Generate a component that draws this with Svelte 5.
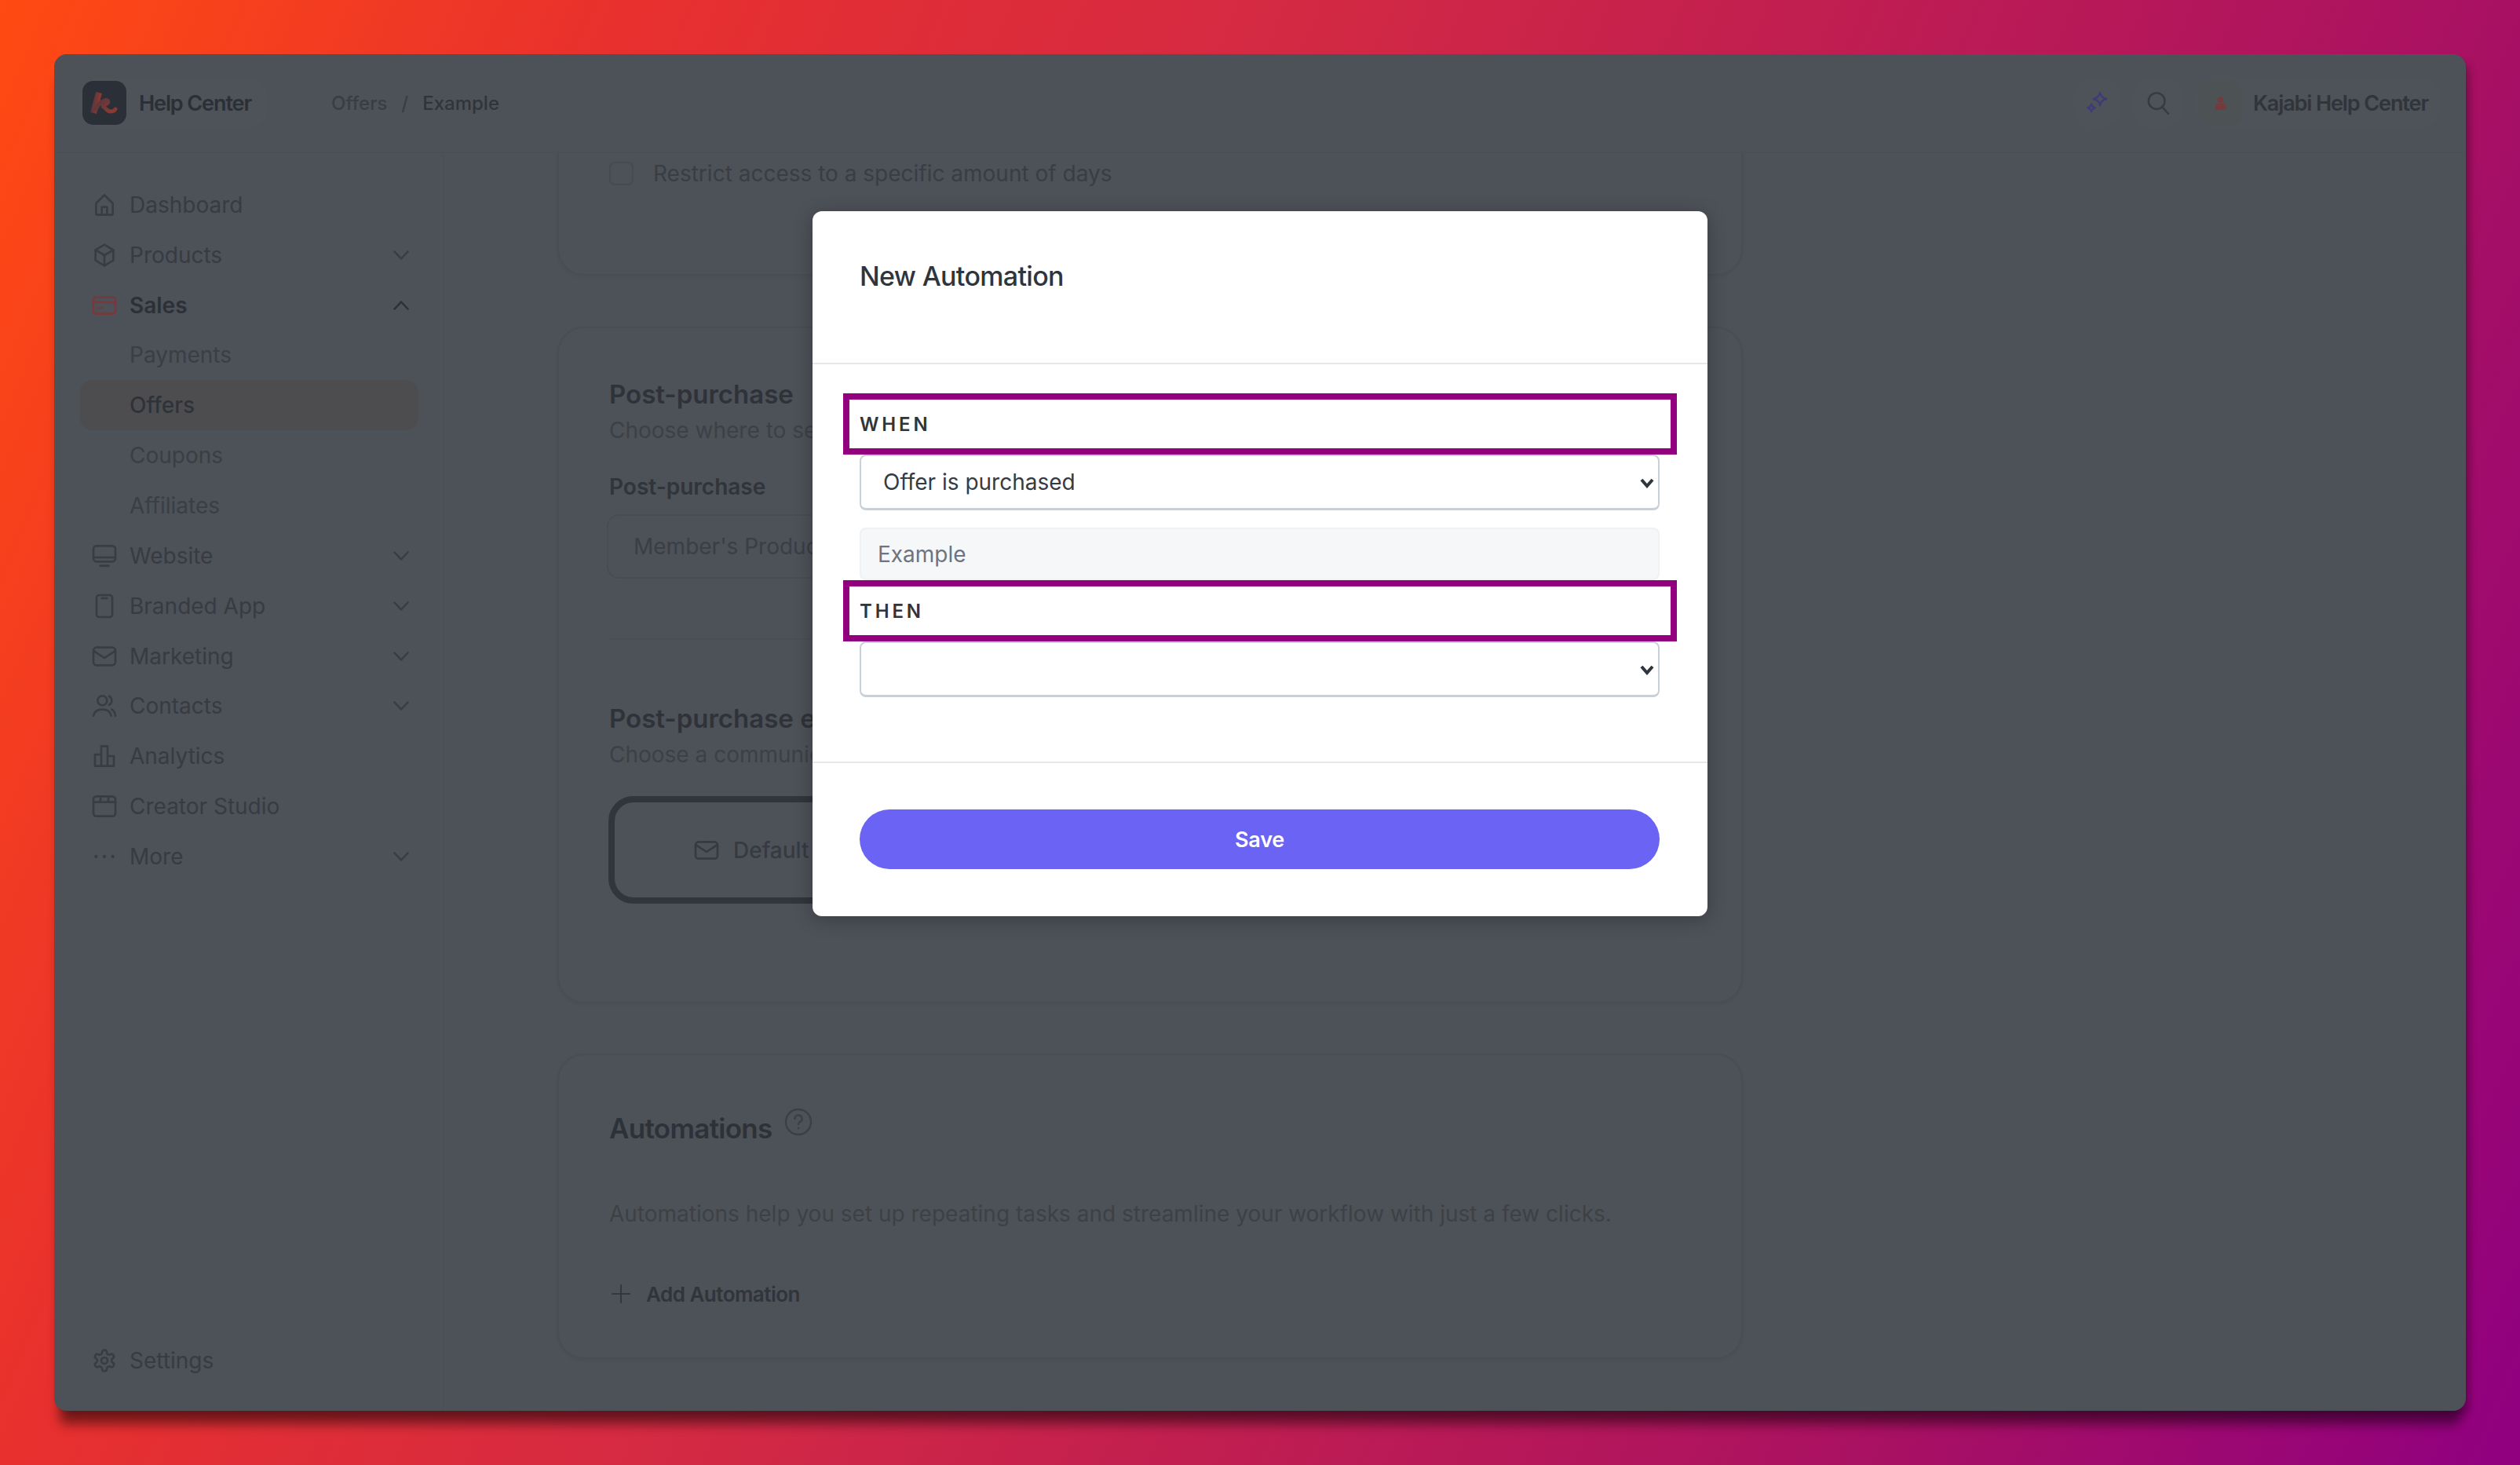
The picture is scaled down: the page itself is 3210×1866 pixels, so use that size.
<script>
  const navItems = [
    { label: "Dashboard", icon: "home" },
    { label: "Products", icon: "box", chevron: "down" },
    { label: "Sales", icon: "card", chevron: "up", active: true },
    { label: "Payments", sub: true },
    { label: "Offers", sub: true, selected: true },
    { label: "Coupons", sub: true },
    { label: "Affiliates", sub: true },
    { label: "Website", icon: "monitor", chevron: "down" },
    { label: "Branded App", icon: "phone", chevron: "down" },
    { label: "Marketing", icon: "mail", chevron: "down" },
    { label: "Contacts", icon: "people", chevron: "down" },
    { label: "Analytics", icon: "bars" },
    { label: "Creator Studio", icon: "studio" },
    { label: "More", icon: "dots", chevron: "down" }
  ];
</script>

{#snippet icon(name)}
  <svg class="icon" class:red={name === "card"} viewBox="0 0 24 24" fill="none" stroke="currentColor" stroke-width="2" stroke-linecap="round" stroke-linejoin="round">
    {#if name === "home"}
      <path d="M4 10.500 12 2.500l8 8V20a1.500 1.500 0 0 1-1.500 1.500h-13A1.500 1.500 0 0 1 4 20z" />
      <path d="M9.500 21.500V14h5v7.500" />
    {:else if name === "box"}
      <path d="M12 2 20.500 7v10L12 22l-8.500-5V7z" />
      <path d="M3.500 7 12 12l8.500-5M12 12v10" />
    {:else if name === "card"}
      <rect x="1.500" y="4" width="21" height="16" rx="2.500" />
      <path d="M1.500 9h21M5.500 14.500h4" />
    {:else if name === "monitor"}
      <rect x="1.500" y="2.500" width="21" height="15" rx="3" />
      <path d="M1.500 13.500h21M8 21.500h8" />
    {:else if name === "phone"}
      <rect x="4.500" y="1.500" width="15" height="21" rx="2.500" />
      <path d="M9.500 4.500h5" />
    {:else if name === "mail"}
      <rect x="1.500" y="3.500" width="21" height="17" rx="3" />
      <path d="M2 7l10 6.500L22 7" />
    {:else if name === "people"}
      <circle cx="10" cy="7" r="4.500" />
      <path d="M1.500 21.500c.8-4 4.200-6 8.500-6s7.700 2 8.500 6M16.500 2.800a4.800 4.800 0 0 1 0 8.400M19 15.500c1.800.9 3 3 3.500 6" />
    {:else if name === "bars"}
      <path d="M3 21.500V10.500h6v11zM9 21.500V2.500h6v19zM15 21.500V12h6v9.500zM3 21.500h18" />
    {:else if name === "studio"}
      <rect x="1.500" y="2.500" width="21" height="19" rx="3" />
      <path d="M1.500 8h21M8.500 2.500 8 8M16 2.500 15.500 8" />
    {:else if name === "dots"}
      <circle cx="4" cy="12" r="1.600" fill="currentColor" stroke="none" />
      <circle cx="12" cy="12" r="1.600" fill="currentColor" stroke="none" />
      <circle cx="20" cy="12" r="1.600" fill="currentColor" stroke="none" />
    {:else if name === "gear"}
      <path d="M12.220 2h-.44a2 2 0 0 0-2 2v.18a2 2 0 0 1-1 1.730l-.43.25a2 2 0 0 1-2 0l-.15-.08a2 2 0 0 0-2.730.73l-.22.38a2 2 0 0 0 .73 2.730l.15.1a2 2 0 0 1 1 1.720v.51a2 2 0 0 1-1 1.740l-.15.09a2 2 0 0 0-.73 2.730l.22.38a2 2 0 0 0 2.730.73l.15-.08a2 2 0 0 1 2 0l.43.25a2 2 0 0 1 1 1.730V20a2 2 0 0 0 2 2h.44a2 2 0 0 0 2-2v-.18a2 2 0 0 1 1-1.730l.43-.25a2 2 0 0 1 2 0l.15.08a2 2 0 0 0 2.730-.73l.22-.39a2 2 0 0 0-.73-2.730l-.15-.08a2 2 0 0 1-1-1.740v-.5a2 2 0 0 1 1-1.740l.15-.09a2 2 0 0 0 .73-2.730l-.22-.38a2 2 0 0 0-2.730-.73l-.15.08a2 2 0 0 1-2 0l-.43-.25a2 2 0 0 1-1-1.730V4a2 2 0 0 0-2-2z" />
      <circle cx="12" cy="12" r="3" />
    {/if}
  </svg>
{/snippet}

{#snippet chevron(dir)}
  <svg class="chevron" class:strong={dir === "up"} viewBox="0 0 24 24" fill="none" stroke="currentColor" stroke-width="2.500" stroke-linecap="round" stroke-linejoin="round">
    <path d={dir === "up" ? "M3.500 16.500 12 7.500l8.500 9" : "M3.500 7.500 12 16.500l8.500-9"} />
  </svg>
{/snippet}

{#snippet selectArrow()}
  <svg class="select-arrow" viewBox="0 0 18 14" width="18" height="14" fill="none" stroke="#2f353d" stroke-width="4">
    <path d="M2 3l7 8 7-8" />
  </svg>
{/snippet}

<div class="window">
  <header class="topbar">
    <div class="brand">
      <div class="logo">
        <svg viewBox="0 0 56 56" width="56" height="56" fill="none" stroke-linecap="round">
          <defs>
            <linearGradient id="kgrad" x1="0" y1="0" x2="1" y2="0.6">
              <stop offset="0" stop-color="#54363f" />
              <stop offset="1" stop-color="#8a3a30" />
            </linearGradient>
          </defs>
          <path d="M21 15 14 41" stroke="url(#kgrad)" stroke-width="8" stroke-linecap="butt" />
          <path d="M17 36c4-8 11-13 15-11 3 2-2 6-8 7 5 0 6 7 12 7 3 0 5-1 6-3" stroke="url(#kgrad)" stroke-width="5" />
        </svg>
      </div>
      <span>Help Center</span>
    </div>
    <nav class="crumbs">
      <span>Offers</span>
      <span class="slash">/</span>
      <span class="current">Example</span>
    </nav>
    <div class="top-actions">
      <div class="round-btn spark">
        <svg viewBox="0 0 32 32" width="32" height="32" fill="none" stroke="#3e3b78" stroke-width="2.400" stroke-linejoin="round">
          <path d="M20 3c.8 4.400 2.800 6.600 8 8-5.200 1.400-7.200 3.600-8 8-.8-4.400-2.800-6.600-8-8 5.200-1.400 7.200-3.600 8-8z" />
          <path d="M9 17.500c.5 2.700 1.800 4 4.800 4.800-3 .8-4.300 2.100-4.800 4.700-.5-2.600-1.800-3.900-4.800-4.700 3-.8 4.300-2.100 4.800-4.800z" />
        </svg>
      </div>
      <div class="round-btn">
        <svg viewBox="0 0 32 32" width="30" height="30" fill="none" stroke="#363a41" stroke-width="2.600" stroke-linecap="round">
          <circle cx="14" cy="13.500" r="11" />
          <path d="M22 22 30 31" />
        </svg>
      </div>
      <div class="user">
        <div class="avatar">
          <svg viewBox="0 0 20 20" width="17" height="17" fill="#763a3c">
            <circle cx="10" cy="5" r="4.500" />
            <path d="M1.500 18c0-5 2-7 4-7h9c2 0 4 2 4 7 0 1-.5 1.500-1.500 1.500H3c-1 0-1.500-.5-1.500-1.500z" />
          </svg>
        </div>
        <span>Kajabi Help Center</span>
      </div>
    </div>
  </header>

  <div class="layout">
    <aside class="sidebar">
      <ul class="nav">
        {#each navItems as item (item.label)}
          <li class="row" class:sub={item.sub} class:selected={item.selected} class:active={item.active}>
            {#if item.icon}{@render icon(item.icon)}{/if}
            <span class="row-label">{item.label}</span>
            {#if item.chevron}{@render chevron(item.chevron)}{/if}
          </li>
        {/each}
      </ul>
      <div class="row settings">
        {@render icon("gear")}
        <span class="row-label">Settings</span>
      </div>
    </aside>

    <main class="content">
      <section class="card access">
        <label class="check-row">
          <span class="checkbox"></span>
          <span>Restrict access to a specific amount of days</span>
        </label>
      </section>

      <section class="card post">
        <h3>Post-purchase</h3>
        <p class="hint">Choose where to send</p>
        <div class="field-label">Post-purchase</div>
        <div class="fake-input">Member's Products</div>
        <hr />
        <h3 class="second">Post-purchase email</h3>
        <p class="hint">Choose a communication</p>
        <div class="choice">
          <svg viewBox="0 0 24 24" width="32" height="32" fill="none" stroke="#363a41" stroke-width="2" stroke-linejoin="round">
            <rect x="1.500" y="4" width="21" height="16" rx="3" />
            <path d="M2 7l10 6.500L22 7" />
          </svg>
          <span>Default</span>
        </div>
      </section>

      <section class="card automations">
        <div class="auto-title">
          <h2>Automations</h2>
          <svg class="help" viewBox="0 0 36 36" width="36" height="36" fill="none" stroke="#3b3f46" stroke-width="2.400" stroke-linecap="round">
            <circle cx="18" cy="18" r="16" />
            <path d="M13.500 14a4.500 4.500 0 1 1 6.500 4c-1.500.8-2 1.600-2 3" />
            <circle cx="18" cy="26" r="1.200" fill="#3b3f46" stroke="none" />
          </svg>
        </div>
        <p class="auto-desc">Automations help you set up repeating tasks and streamline your workflow with just a few clicks.</p>
        <div class="add-auto">
          <svg viewBox="0 0 24 24" width="24" height="24" fill="none" stroke="#33373e" stroke-width="2" stroke-linecap="round">
            <path d="M12 1v22M1 12h22" />
          </svg>
          <span>Add Automation</span>
        </div>
      </section>
    </main>
  </div>

  <div class="backdrop">
    <div class="modal">
      <div class="modal-head">
        <h1>New Automation</h1>
      </div>
      <div class="modal-body">
        <div class="step-label">WHEN</div>
        <div class="select-wrap">
          <select class="select">
            <option>Offer is purchased</option>
          </select>
          {@render selectArrow()}
        </div>
        <input class="readonly" value="Example" disabled />
        <div class="step-label">THEN</div>
        <div class="select-wrap">
          <select class="select">
            <option></option>
          </select>
          {@render selectArrow()}
        </div>
      </div>
      <div class="modal-foot">
        <button class="save">Save</button>
      </div>
    </div>
  </div>
</div>

<style>
  :global(body) {
    margin: 0;
    height: 1866px;
    overflow: hidden;
    font-family: Inter, "Liberation Sans", sans-serif;
    background: linear-gradient(113deg, #ff4a12 0%, #e8302e 20%, #d52a42 40%, #a81063 80%, #900080 100%);
  }

  .window {
    position: relative;
    display: flex;
    flex-direction: column;
    width: 3072px;
    height: 1728px;
    margin: 69px;
    background: #4d5158;
    border-radius: 16px;
    box-shadow: 0 24px 14px -6px rgba(0, 0, 0, 0.42), 8px 8px 10px -2px rgba(0, 0, 0, 0.22);
    color: #363a41;
  }

  /* Top bar */
  .topbar {
    display: flex;
    align-items: center;
    height: 126px;
    flex-shrink: 0;
    padding: 0 33px;
    box-sizing: border-box;
    border-bottom: 2px solid #4b4f56;
  }

  .brand {
    display: flex;
    align-items: center;
    gap: 16px;
    height: 64px;
    padding: 0 20px 0 3px;
    border-radius: 22px;
    background: #4e5259;
    font-size: 27px;
    font-weight: 600;
    letter-spacing: -1.1px;
    color: #2b2f36;
  }

  .logo {
    width: 56px;
    height: 56px;
    border-radius: 14px;
    background: #2a2f38;
  }

  .crumbs {
    display: flex;
    gap: 18px;
    margin-left: 82px;
    font-size: 24px;
    font-weight: 500;
    color: #393d44;
  }

  .crumbs .current {
    color: #30343b;
  }

  .top-actions {
    display: flex;
    align-items: center;
    gap: 16px;
    margin-left: auto;
  }

  .round-btn {
    display: flex;
    align-items: center;
    justify-content: center;
    width: 64px;
    height: 64px;
    border-radius: 24px;
    background: #4e5259;
  }

  .round-btn.spark {
    width: 60px;
  }

  .user {
    display: flex;
    align-items: center;
    gap: 13px;
    height: 64px;
    padding: 0 15px 0 3px;
    border-radius: 24px;
    background: #4e5259;
    font-size: 27px;
    font-weight: 600;
    letter-spacing: -1.1px;
    color: #30343b;
  }

  .avatar {
    display: flex;
    align-items: center;
    justify-content: center;
    width: 57px;
    height: 56px;
    border-radius: 16px;
    background: #4d5255;
  }

  .layout {
    display: flex;
    flex: 1;
    min-height: 0;
  }

  /* Sidebar */
  .sidebar {
    display: flex;
    flex-direction: column;
    width: 497px;
    flex-shrink: 0;
    padding: 34px 31px 32px 33px;
    box-sizing: border-box;
    border-right: 2px solid #4b4f56;
  }

  .nav {
    list-style: none;
    margin: 0;
    padding: 0;
  }

  .row {
    display: flex;
    align-items: center;
    gap: 16px;
    height: 63.85px;
    padding: 0 10px 0 15px;
    box-sizing: border-box;
    border-radius: 16px;
    font-size: 28px;
    color: #373b42;
  }

  .row.sub {
    padding-left: 63px;
    color: #3a3e45;
  }

  .row.selected {
    background: #4d4d50;
    color: #2f3339;
    font-weight: 500;
  }

  .row.active {
    color: #2c3037;
    font-weight: 600;
  }

  .row-label {
    flex: 1;
  }

  .settings {
    margin-top: auto;
  }

  .icon {
    width: 32px;
    height: 32px;
    flex-shrink: 0;
    color: #383c43;
  }

  .icon.red {
    color: #77393b;
  }

  .chevron {
    width: 24px;
    height: 24px;
    flex-shrink: 0;
    color: #383c43;
  }

  .chevron.strong {
    color: #2c3037;
  }

  /* Page behind the modal */
  .content {
    flex: 1;
    min-width: 0;
    padding-left: 144px;
    overflow: hidden;
  }

  .card {
    width: 1510px;
    box-sizing: border-box;
    padding: 0 64px;
    border: 2px solid #494d54;
    border-radius: 34px;
    box-shadow: 0 2px 4px rgba(0, 0, 0, 0.04);
  }

  .card.access {
    height: 258px;
    margin-top: -102px;
    padding-top: 109px;
  }

  .check-row {
    display: flex;
    align-items: center;
    gap: 25px;
    font-size: 28px;
    color: #393d44;
  }

  .checkbox {
    width: 31px;
    height: 30px;
    border: 2px solid #464a51;
    border-radius: 7px;
    box-sizing: border-box;
  }

  .card.post {
    height: 862px;
    margin-top: 65px;
    padding-top: 62px;
  }

  .card h3 {
    margin: 0;
    font-size: 33px;
    line-height: 44px;
    font-weight: 600;
    color: #2f3339;
  }

  .hint {
    margin: 4px 0 0;
    font-size: 28px;
    line-height: 40px;
    color: #3c4047;
  }

  .field-label {
    margin-top: 34px;
    font-size: 28px;
    line-height: 36px;
    font-weight: 600;
    color: #30343b;
  }

  .fake-input {
    display: flex;
    align-items: center;
    width: 900px;
    height: 82px;
    margin: 17px 0 0 -3px;
    padding-left: 32px;
    box-sizing: border-box;
    border: 2px solid #484c53;
    border-radius: 16px;
    font-size: 28px;
    color: #3a3e45;
  }

  .card hr {
    height: 2px;
    margin: 76px 0 0;
    border: none;
    background: #4a4e55;
  }

  .card h3.second {
    margin-top: 78px;
  }

  .choice {
    display: flex;
    align-items: center;
    gap: 18px;
    width: 650px;
    height: 137px;
    margin: 33px 0 0 -1px;
    padding-left: 101px;
    box-sizing: border-box;
    border: 8px solid #31353c;
    border-radius: 32px;
    font-size: 28px;
    font-weight: 500;
    color: #363a41;
  }

  .card.automations {
    height: 389px;
    margin-top: 64px;
    padding-top: 71px;
  }

  .auto-title {
    display: flex;
    align-items: flex-start;
    gap: 15px;
  }

  .auto-title h2 {
    margin: 0;
    font-size: 35px;
    line-height: 44px;
    font-weight: 600;
    letter-spacing: -0.02em;
    color: #2d3138;
  }

  .help {
    margin-top: -4px;
  }

  .auto-desc {
    margin: 67px 0 0;
    font-size: 28px;
    line-height: 40px;
    color: #3d4144;
  }

  .add-auto {
    display: flex;
    align-items: center;
    gap: 20px;
    margin: 62px 0 0 3px;
    height: 40px;
    font-size: 26px;
    font-weight: 600;
    letter-spacing: -0.02em;
    color: #30343b;
  }

  /* Modal */
  .backdrop {
    position: absolute;
    inset: 0;
    display: flex;
    justify-content: center;
    padding-top: 200px;
  }

  .modal {
    width: 1140px;
    height: 898px;
    background: #fff;
    border-radius: 12px;
    box-shadow: 0 4px 24px rgba(0, 0, 0, 0.25);
    color: #2f353d;
  }

  .modal-head {
    height: 195px;
    padding: 60px 60px 0;
    box-sizing: border-box;
    border-bottom: 2px solid #e5e7eb;
  }

  .modal-head h1 {
    margin: 0;
    font-size: 34px;
    line-height: 46px;
    font-weight: 500;
    letter-spacing: -0.02em;
  }

  .modal-body {
    display: flex;
    flex-direction: column;
    height: 508px;
    padding: 37px 61px 0 60px;
    box-sizing: border-box;
    border-bottom: 2px solid #e5e7eb;
  }

  .step-label {
    display: flex;
    align-items: center;
    height: 78px;
    margin: 0 -22px 0 -21px;
    padding: 0 13px;
    box-sizing: border-box;
    border: 8px solid #93007f;
    font-size: 24px;
    font-weight: 600;
    letter-spacing: 0.16em;
    color: #2f353d;
  }

  .select-wrap {
    position: relative;
    height: 71px;
  }

  .select {
    appearance: none;
    display: block;
    width: 100%;
    height: 100%;
    margin: 0;
    padding: 0 28px;
    box-sizing: border-box;
    border: 2px solid #c8d0da;
    border-bottom-width: 3px;
    border-radius: 8px;
    background: #fff;
    font-family: inherit;
    font-size: 28px;
    color: #353b43;
  }

  .select-arrow {
    position: absolute;
    top: 29px;
    right: 7px;
    pointer-events: none;
  }

  .readonly {
    width: 100%;
    height: 67px;
    margin: 22px 0 0;
    padding: 0 21px;
    box-sizing: border-box;
    border: 2px solid #f0f1f3;
    border-radius: 8px;
    background: #f6f7f9;
    font-family: inherit;
    font-size: 28px;
    color: #6b7480;
    -webkit-text-fill-color: #6b7480;
    opacity: 1;
  }

  .modal-foot {
    padding: 59px 61px 0 60px;
  }

  .save {
    display: block;
    width: 100%;
    height: 76px;
    border: none;
    border-radius: 38px;
    background: #6a63f4;
    font-family: inherit;
    font-size: 27px;
    font-weight: 600;
    letter-spacing: -0.01em;
    color: #fff;
  }
</style>
